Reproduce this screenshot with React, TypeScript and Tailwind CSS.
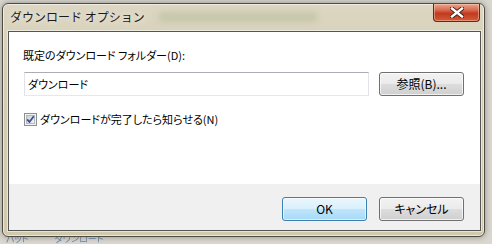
import React from 'react';

const Checkbox = () => (
  <svg width="13" height="13" viewBox="0 0 13 13" className="shrink-0">
    <rect x="0.5" y="0.5" width="12" height="12" fill="#f4f4f4" stroke="#8e8f8f" />
    <defs>
      <linearGradient id="cbg" x1="0" y1="0" x2="1" y2="1">
        <stop offset="0" stopColor="#cbcfd5" />
        <stop offset="1" stopColor="#f6f6f6" />
      </linearGradient>
    </defs>
    <rect x="2.5" y="2.5" width="8" height="8" fill="url(#cbg)" stroke="#b3b8c0" strokeWidth="1" />
    <path d="M3.2 6.4 L5.4 9 L9.8 3.2" fill="none" stroke="#3b4f8f" strokeWidth="1.8" strokeLinejoin="round" />
  </svg>
);

const CloseGlyph = () => (
  <svg width="14" height="11" viewBox="0 0 14 11">
    <path d="M2 1.5 L12 9.5 M12 1.5 L2 9.5" stroke="#3d1b14" strokeWidth="4.2" strokeLinecap="square" />
    <path d="M2 1.5 L12 9.5 M12 1.5 L2 9.5" stroke="#ffffff" strokeWidth="2.4" strokeLinecap="square" />
  </svg>
);

const Button = ({ label, primary = false }: { label: string; primary?: boolean }) => (
  <button
    className={`w-[85px] h-[24px] rounded-[3px] border flex items-center justify-center text-[12px] text-black leading-none ${
      primary
        ? 'border-[#3c7fb1] bg-[linear-gradient(to_bottom,#eaf6fd_0%,#d9f0fc_50%,#bee6fd_51%,#a7d9f5_100%)] shadow-[inset_0_0_0_1px_rgba(255,255,255,0.6)]'
        : 'border-[#707070] bg-[linear-gradient(to_bottom,#f2f2f2_0%,#ebebeb_50%,#dddddd_51%,#cfcfcf_100%)] shadow-[inset_0_0_0_1px_rgba(255,255,255,0.7)]'
    }`}
  >
    {label}
  </button>
);

export default function App() {
  return (
    <div className="relative w-[492px] h-[244px] overflow-hidden bg-[#d9d7cf] font-['Meiryo_UI','Noto_Sans_CJK_JP',sans-serif] [font-feature-settings:'palt']">
      {/* desktop behind the dialog */}
      <div className="h-full flex flex-col justify-end">
        <div className="flex gap-[26px] pl-[6px] h-[10px] text-[9px] leading-[10px] text-[#3a64a8] opacity-70 blur-[0.5px]">
          <span>パッド</span>
          <span>ダウンロード</span>
        </div>
      </div>

      {/* dialog window */}
      <div className="absolute left-[2px] top-[3px] w-[483px] h-[234px] rounded-[6px] border border-[#4e4b42] bg-[linear-gradient(to_bottom,#dcd6c2_0%,#d3ccb2_40%,#d1c9ac_100%)] shadow-[inset_0_0_0_1px_rgba(255,255,255,0.55),0_0_6px_rgba(0,0,0,0.35)] flex flex-col pl-[5px] pr-[3px] pb-[5px]">
        {/* title bar */}
        <div className="relative h-[27px] flex items-center">
          <div className="absolute left-[150px] top-[8px] w-[160px] h-[10px] rounded-full bg-[#a7b38c] opacity-40 blur-[3px]" />
          <span className="relative pl-[2px] pb-[1px] text-[12px] text-[#1b1b1b] [font-feature-settings:normal] [text-shadow:0_0_6px_rgba(255,255,255,0.9)]">
            ダウンロード オプション
          </span>
          <button className="absolute left-[425px] top-0 w-[47px] h-[18px] rounded-b-[4px] border border-t-0 border-[#5e2a1d] bg-[linear-gradient(to_bottom,#eba58f_0%,#d86c52_35%,#c23a20_55%,#d15a38_100%)] shadow-[inset_0_0_0_1px_rgba(255,220,200,0.45)] flex items-center justify-center">
            <CloseGlyph />
          </button>
        </div>

        {/* client area */}
        <div className="flex-1 border border-[#555555] shadow-[0_0_0_1px_rgba(255,255,255,0.5)] bg-white flex flex-col">
          <div className="h-[152px] pl-[14px] pt-[15px] flex flex-col">
            <div className="h-[16px] flex items-center text-[11px] text-black">
              既定のダウンロード フォルダー(D):
            </div>
            <div className="mt-[9px] pl-[1px] flex items-center gap-[10px]">
              <div className="w-[345px] h-[24px] border border-[#e2e3ea] border-t-[#abadb3] border-b-[#e3e9ef] flex items-center pl-[3px] text-[11px] text-black">
                ダウンロード
              </div>
              <Button label="参照(B)..." />
            </div>
            <div className="mt-[17px] pl-[1px] flex items-center gap-[3px] h-[13px]">
              <Checkbox />
              <span className="text-[11px] text-black leading-none">ダウンロードが完了したら知らせる(N)</span>
            </div>
          </div>
          <div className="flex-1 bg-[#f0f0f0] flex justify-end items-start pt-[13px] pr-[16px] gap-[12px]">
            <Button label="OK" primary />
            <Button label="キャンセル" />
          </div>
        </div>
      </div>
    </div>
  );
}
